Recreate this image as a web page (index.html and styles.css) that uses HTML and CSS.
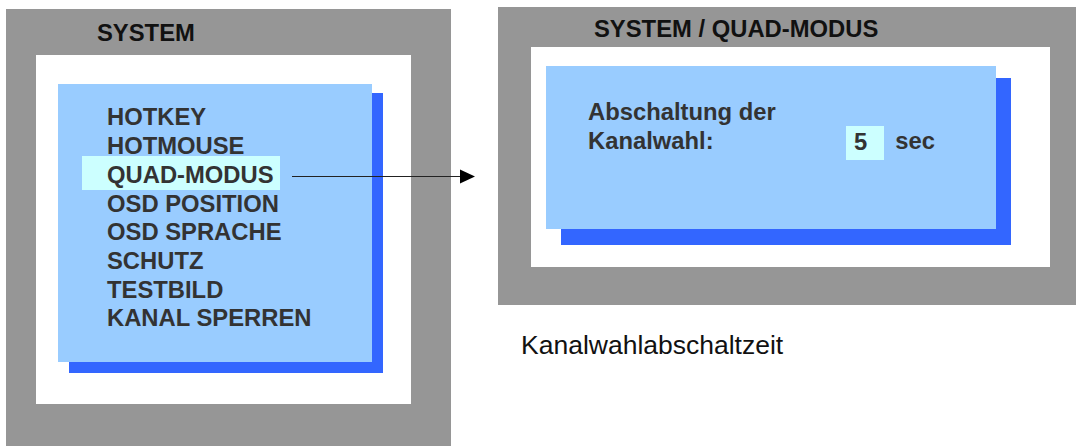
FILE: index.html
```html
<!DOCTYPE html>
<html lang="de">
<head>
  <meta charset="UTF-8">
  <title>System / Quad-Modus</title>
  <link rel="stylesheet" href="styles.css">
</head>
<body>
  <div class="page">

    <div class="screen screen-main">
      <div class="screen-title">SYSTEM</div>
      <div class="screen-body">
        <div class="osd osd-menu">
          <ul class="menu">
            <li>HOTKEY</li>
            <li>HOTMOUSE</li>
            <li><span class="selected">QUAD-MODUS</span></li>
            <li>OSD POSITION</li>
            <li>OSD SPRACHE</li>
            <li>SCHUTZ</li>
            <li>TESTBILD</li>
            <li>KANAL SPERREN</li>
          </ul>
        </div>
      </div>
    </div>

    <svg class="arrow" width="188" height="16" viewBox="0 0 188 16">
      <line x1="2" y1="8.5" x2="172" y2="8.5" stroke="#222" stroke-width="1"/>
      <polygon points="170,1.5 185,8.5 170,15.5" fill="#000"/>
    </svg>

    <div class="detail">
      <div class="screen screen-sub">
        <div class="screen-title">SYSTEM / QUAD-MODUS</div>
        <div class="screen-body">
          <div class="osd osd-setting">
            <div>Abschaltung der</div>
            <div class="setting-row"><span class="setting-label">Kanalwahl:</span><span class="setting-value">5</span><span class="setting-unit">sec</span></div>
          </div>
        </div>
      </div>
      <p class="caption">Kanalwahlabschaltzeit</p>
    </div>

  </div>
</body>
</html>
```

FILE: styles.css
```css
body {
  margin: 0;
  font-family: "Liberation Sans", Arial, sans-serif;
  background: #ffffff;
  overflow: hidden;
}
.page {
  position: relative;
  display: flex;
  align-items: flex-start;
  padding-left: 6px;
  height: 446px;
  overflow: hidden;
}

/* grey monitor frame */
.screen {
  background: #969696;
}
.screen-title {
  box-sizing: border-box;
  font-size: 23.8px;
  font-weight: bold;
  line-height: 23px;
  color: #111;
  white-space: nowrap;
}
.screen-body {
  position: relative;
  z-index: 0;
  box-sizing: border-box;
  background: #ffffff;
}

/* light blue OSD window with blue drop shadow */
.osd {
  position: relative;
  box-sizing: border-box;
  background: #99ccff;
  color: #333;
  font-size: 23.8px;
  font-weight: bold;
  line-height: 28.7px;
}
.osd::before {
  content: "";
  position: absolute;
  z-index: -1;
  background: #3366ff;
}

/* left: system menu */
.screen-main {
  margin-top: 9px;
  width: 445px;
  height: 437px;
  flex-shrink: 0;
}
.screen-main .screen-title {
  height: 46px;
  padding: 12px 0 0 91px;
}
.screen-main .screen-body {
  margin-left: 30px;
  width: 375px;
  height: 349px;
  padding: 29px 0 0 22px;
}
.osd-menu {
  width: 314px;
  height: 278px;
}
.osd-menu::before {
  left: 11px;
  top: 9px;
  right: -11px;
  bottom: -11px;
}
.menu {
  list-style: none;
  margin: 0;
  padding: 19.4px 0 0 49px;
  white-space: nowrap;
}
.selected {
  background: #ccffff;
  margin-left: -25px;
  padding: 5.1px 6px 2.3px 25px;
}

.arrow {
  position: absolute;
  left: 290px;
  top: 168px;
}

/* right: quad mode detail */
.detail {
  margin-left: 47px;
  margin-top: 7px;
  flex-shrink: 0;
}
.screen-sub {
  width: 578px;
  height: 298px;
}
.screen-sub .screen-title {
  height: 40px;
  padding: 9.5px 0 0 96px;
}
.screen-sub .screen-body {
  margin-left: 33px;
  width: 519px;
  height: 220px;
  padding: 19px 0 0 15px;
}
.osd-setting {
  width: 450px;
  height: 163px;
  padding: 32.4px 0 0 42px;
}
.osd-setting::before {
  left: 15px;
  top: 12px;
  right: -15px;
  bottom: -16px;
}
.setting-label {
  display: inline-block;
  width: 258px;
}
.setting-value {
  background: #ccffff;
  padding: 1.6px 17px 6px 8px;
}
.setting-unit {
  margin-left: 11px;
}

.caption {
  margin: 25px 0 0;
  padding-left: 23px;
  font-size: 26.5px;
  line-height: 30px;
  color: #111;
  white-space: nowrap;
}
```
